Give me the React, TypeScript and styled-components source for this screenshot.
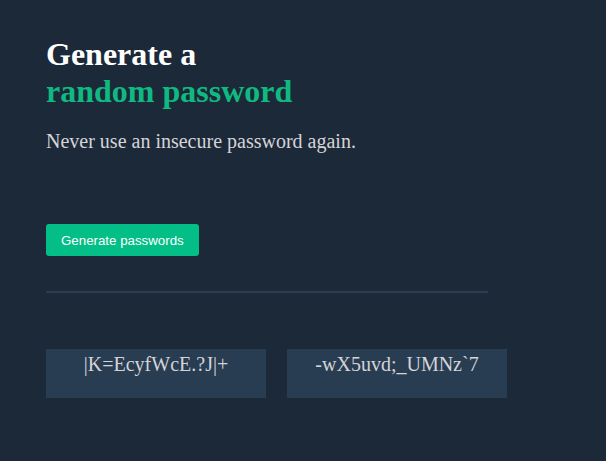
import { FC } from "react";
import styled, { createGlobalStyle } from "styled-components";

const GlobalStyle = createGlobalStyle`
  body {
    margin: 0;
    background-color: #1c2938;
    font-family: "Liberation Serif", "Times New Roman", serif;
  }
`;

const Container = styled.div`
  padding: 36px 46px 40px;
  width: 442px;
`;
const Title = styled.h1`
  margin: 0;
  font-size: 32px;
  font-weight: 700;
  line-height: 37px;
  color: #ffffff;
`;
const Accent = styled.span`
  color: #10b981;
`;
const Subtitle = styled.p`
  margin: 20px 0 0;
  font-size: 20px;
  line-height: 23px;
  color: #d5d4d8;
`;
const Button = styled.button`
  margin-top: 71px;
  border: none;
  border-radius: 3px;
  padding: 0 15px;
  height: 32px;
  background-color: #03be86;
  color: #ffffff;
  font-family: "Liberation Sans", Arial, sans-serif;
  font-size: 13.3px;
  cursor: pointer;
`;
const Divider = styled.hr`
  margin: 35px 0 0;
  border: none;
  height: 2px;
  background-color: #2c3d50;
`;
const Row = styled.div`
  display: flex;
  gap: 21px;
  margin-top: 56px;
`;
const PasswordBox = styled.div`
  flex: 0 0 220px;
  height: 49px;
  padding-top: 4px;
  box-sizing: border-box;
  background-color: #283d52;
  color: #d5d4d8;
  font-size: 20px;
  line-height: 23px;
  text-align: center;
`;

const passwords = ["|K=EcyfWcE.?J|+", "-wX5uvd;_UMNz`7"];

const App: FC = () => {
  return (
    <>
      <GlobalStyle />
      <Container>
        <Title>
          Generate a
          <br />
          <Accent>random password</Accent>
        </Title>
        <Subtitle>Never use an insecure password again.</Subtitle>
        <Button>Generate passwords</Button>
        <Divider />
        <Row>
          {passwords.map((p) => (
            <PasswordBox key={p}>{p}</PasswordBox>
          ))}
        </Row>
      </Container>
    </>
  );
};

export default App;
